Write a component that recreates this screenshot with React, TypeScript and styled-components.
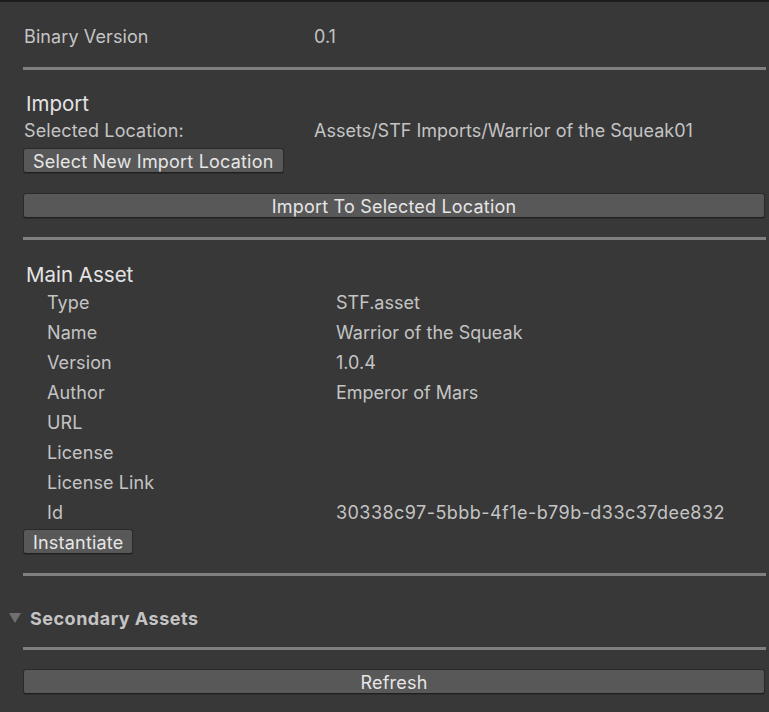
import React from "react";
import styled, { createGlobalStyle } from "styled-components";

const Global = createGlobalStyle`
  html, body { margin: 0; padding: 0; background: #383838; }
  body { font-family: Inter, "Noto Sans", sans-serif; }
`;

const Page = styled.div`
  box-sizing: border-box;
  width: 769px;
  height: 712px;
  background: #383838;
  border-top: 2px solid #1c1c1c;
  padding: 0 3px 0 23px;
  display: flex;
  flex-direction: column;
  overflow: hidden;
  font-family: Inter, "Noto Sans", sans-serif;
  color: #c4c4c4;
  font-size: 18px;
`;

const Row = styled.div<{ $indent?: boolean; $h?: number; $mt?: number }>`
  display: grid;
  grid-template-columns: ${(p) => (p.$indent ? "23px 290px 1fr" : "0 291px 1fr")};
  align-items: center;
  height: ${(p) => p.$h ?? 30}px;
  margin-top: ${(p) => p.$mt ?? 0}px;
  white-space: nowrap;
  padding-top: 1px;
  box-sizing: border-box;
`;

const Label = styled.span`
  padding-left: 1px;
  grid-column: 2;
  letter-spacing: 0.1px;
`;

const Value = styled.span<{ $wide?: boolean }>`
  grid-column: 3;
  letter-spacing: ${(p) => (p.$wide ? "0.45px" : "0")};
`;

const Separator = styled.div<{ $mt: number }>`
  height: 3px;
  background: #7f7f7f;
  margin-top: ${(p) => p.$mt}px;
  flex: none;
`;

const Header = styled.div<{ $mt: number }>`
  height: 28px;
  display: flex;
  align-items: center;
  padding-left: 3px;
  padding-top: 2px;
  box-sizing: border-box;
  margin-top: ${(p) => p.$mt}px;
  font-size: 20.5px;
  color: #e4e4e4;
`;

const Button = styled.button<{ $full?: boolean; $mt: number; $h?: number }>`
  box-sizing: border-box;
  align-self: ${(p) => (p.$full ? "stretch" : "flex-start")};
  margin-top: ${(p) => p.$mt}px;
  margin-right: ${(p) => (p.$full ? 1 : 0)}px;
  height: ${(p) => p.$h ?? 25}px;
  padding: 2px 9px 0;
  background: #585858;
  border: 1px solid #2a2a2a;
  border-bottom-color: #1f1f1f;
  border-radius: 3px;
  box-shadow: 0 1px 0 #2e2e2e;
  color: #e6e6e6;
  font-family: Inter, "Noto Sans", sans-serif;
  font-size: 18px;
  letter-spacing: 0.2px;
  line-height: 1;
  flex: none;
`;

const Foldout = styled.div<{ $mt: number }>`
  display: flex;
  align-items: center;
  height: 30px;
  margin-top: ${(p) => p.$mt}px;
  margin-left: -23px;
  font-weight: 700;
  font-size: 18px;
  color: #c4c4c4;
  letter-spacing: 0.5px;
`;

const Arrow = styled.svg`
  width: 12px;
  height: 10px;
  margin: 0 9px 0 9px;
  flex: none;
`;

export default function App() {
  const meta: [string, string][] = [
    ["Type", "STF.asset"],
    ["Name", "Warrior of the Squeak"],
    ["Version", "1.0.4"],
    ["Author", "Emperor of Mars"],
    ["URL", ""],
    ["License", ""],
    ["License Link", ""],
    ["Id", "30338c97-5bbb-4f1e-b79b-d33c37dee832"],
  ];
  return (
    <>
      <Global />
      <Page>
        <Row $mt={19}>
          <Label>Binary Version</Label>
          <Value>0.1</Value>
        </Row>
        <Separator $mt={16} />
        <Header $mt={18}>Import</Header>
        <Row $h={28}>
          <Label>Selected Location:</Label>
          <Value>Assets/STF Imports/Warrior of the Squeak01</Value>
        </Row>
        <Button $mt={4}>Select New Import Location</Button>
        <Button $full $mt={20}>Import To Selected Location</Button>
        <Separator $mt={19} />
        <Header $mt={19}>Main Asset</Header>
        {meta.map(([k, v]) => (
          <Row key={k} $indent>
            <Label>{k}</Label>
            <Value $wide={k === "Id"}>{v}</Value>
          </Row>
        ))}
        <Button $mt={2} $h={25}>Instantiate</Button>
        <Separator $mt={19} />
        <Foldout $mt={27}>
          <Arrow viewBox="0 0 12 10">
            <path d="M0 0 H12 L6 10 Z" fill="#707070" />
          </Arrow>
          Secondary Assets
        </Foldout>
        <Separator $mt={14} />
        <Button $full $mt={19} $h={25}>Refresh</Button>
      </Page>
    </>
  );
}
